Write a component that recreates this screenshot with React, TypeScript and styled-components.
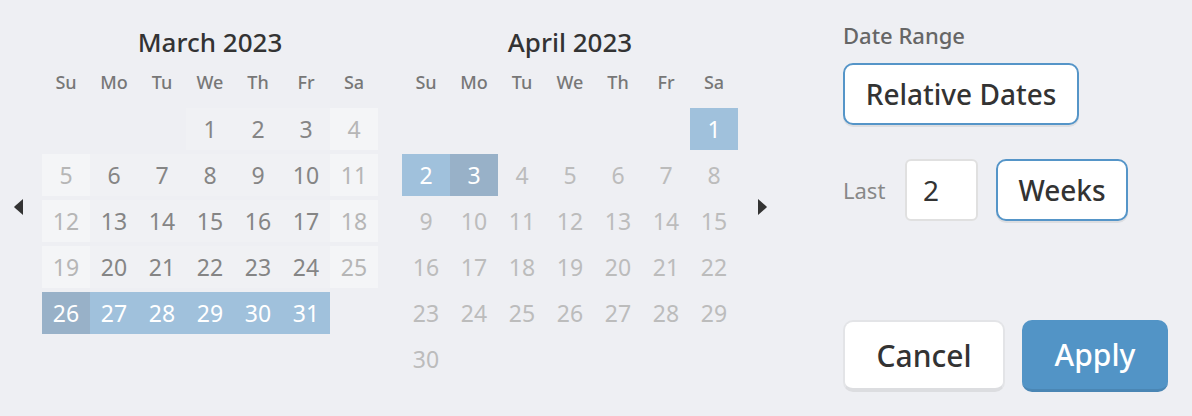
import React from 'react';
import styled, { createGlobalStyle } from 'styled-components';

const GlobalStyle = createGlobalStyle`
  body {
    margin: 0;
    background: #eeeff3;
    font-family: 'Noto Sans', 'Open Sans', sans-serif;
  }
`;

type DayKind = 'empty' | 'weekday' | 'weekend' | 'disabled' | 'range' | 'edge';

const Picker = styled.div`
  display: flex;
  align-items: flex-start;
  padding: 24px 0 0 14px;
  height: 416px;
  box-sizing: border-box;
`;

const NavButton = styled.button<{ $side: 'prev' | 'next' }>`
  display: flex;
  width: 9px;
  padding: 0;
  border: 0;
  background: none;
  margin-top: 175px;
  margin-left: ${(p) => (p.$side === 'next' ? '20px' : '0')};
  margin-right: ${(p) => (p.$side === 'prev' ? '19px' : '0')};
  cursor: pointer;
`;

const Months = styled.div`
  display: flex;
  gap: 24px;
`;

const Month = styled.div`
  display: flex;
  flex-direction: column;
  width: 336px;
`;

const MonthTitle = styled.div`
  height: 36px;
  line-height: 36px;
  text-align: center;
  font-size: 26px;
  font-weight: 500;
  color: #333;
  margin-bottom: 6px;
`;

const WeekHeader = styled.div`
  display: grid;
  grid-template-columns: repeat(7, 48px);
  height: 32px;
  margin-bottom: 10px;
`;

const WeekDay = styled.div`
  text-align: center;
  line-height: 32px;
  font-size: 18px;
  font-weight: 500;
  color: #777;
`;

const DayGrid = styled.div`
  display: grid;
  grid-template-columns: repeat(7, 48px);
  grid-auto-rows: 42px;
  row-gap: 4px;
`;

const dayBg: Record<DayKind, string> = {
  empty: 'transparent',
  weekday: '#f0f1f4',
  weekend: '#f4f5f7',
  disabled: 'transparent',
  range: '#a0c1dc',
  edge: '#98b1c8',
};

const dayColor: Record<DayKind, string> = {
  empty: 'transparent',
  weekday: '#858585',
  weekend: '#b6b6b6',
  disabled: '#bcbcbc',
  range: '#fff',
  edge: '#fff',
};

const Day = styled.div<{ $kind: DayKind }>`
  display: flex;
  align-items: center;
  justify-content: center;
  font-size: 23px;
  background: ${(p) => dayBg[p.$kind]};
  color: ${(p) => dayColor[p.$kind]};
`;

const Panel = styled.div`
  display: flex;
  flex-direction: column;
  margin-left: 76px;
  width: 325px;
`;

const Label = styled.div`
  line-height: 22px;
  font-size: 22px;
  font-weight: 500;
  color: #666;
`;

const OutlineButton = styled.button<{ $width: number }>`
  width: ${(p) => p.$width}px;
  height: 62px;
  box-sizing: border-box;
  background: #fff;
  border: 2px solid #5595c8;
  border-radius: 10px;
  box-shadow: 0 2px 0 rgba(0, 0, 0, 0.07);
  font-family: inherit;
  font-size: 28px;
  font-weight: 500;
  color: #333;
  padding: 0;
  cursor: pointer;
`;

const RangeRow = styled.div`
  display: flex;
  align-items: center;
  margin-top: 34px;
`;

const LastLabel = styled.span`
  font-size: 22px;
  color: #888;
  width: 62px;
`;

const CountInput = styled.input`
  width: 73px;
  height: 62px;
  box-sizing: border-box;
  border: 2px solid #e0e0e0;
  border-radius: 6px;
  background: #fff;
  padding: 0 0 0 16px;
  font-family: inherit;
  font-size: 28px;
  color: #333;
  margin-right: 18px;
  outline: none;
`;

const Actions = styled.div`
  display: flex;
  gap: 17px;
  margin-top: 99px;
`;

const ActionButton = styled.button<{ $primary?: boolean; $width: number }>`
  width: ${(p) => p.$width}px;
  height: 72px;
  box-sizing: border-box;
  border-radius: 10px;
  border: ${(p) => (p.$primary ? '0' : '2px solid #e3e4e7')};
  border-bottom: ${(p) => (p.$primary ? '3px solid #4a86b4' : '4px solid #dcdde0')};
  background: ${(p) => (p.$primary ? '#5294c6' : '#fff')};
  color: ${(p) => (p.$primary ? '#fff' : '#333')};
  font-family: inherit;
  font-size: 30px;
  font-weight: 500;
  padding: 0;
  cursor: pointer;
`;

const weekDays = ['Su', 'Mo', 'Tu', 'We', 'Th', 'Fr', 'Sa'];

type MonthSpec = {
  title: string;
  offset: number;
  days: number;
  kindOf: (day: number, col: number) => DayKind;
};

const march: MonthSpec = {
  title: 'March 2023',
  offset: 3,
  days: 31,
  kindOf: (d, col) => {
    if (d === 26) return 'edge';
    if (d > 26) return 'range';
    return col === 0 || col === 6 ? 'weekend' : 'weekday';
  },
};

const april: MonthSpec = {
  title: 'April 2023',
  offset: 6,
  days: 30,
  kindOf: (d) => {
    if (d === 3) return 'edge';
    if (d <= 2) return 'range';
    return 'disabled';
  },
};

const Arrow = ({ dir }: { dir: 'left' | 'right' }) => (
  <svg width="9" height="16" viewBox="0 0 9 16">
    {dir === 'left' ? (
      <path d="M9 0 L1 7 L0 8 L1 9 L9 16 Z" fill="#333" />
    ) : (
      <path d="M0 0 L8 7 L9 8 L8 9 L0 16 Z" fill="#333" />
    )}
  </svg>
);

const MonthView = ({ spec }: { spec: MonthSpec }) => {
  const cells: React.ReactNode[] = [];
  for (let i = 0; i < spec.offset; i++) {
    cells.push(<Day key={`e${i}`} $kind="empty" />);
  }
  for (let d = 1; d <= spec.days; d++) {
    const col = (spec.offset + d - 1) % 7;
    cells.push(
      <Day key={d} $kind={spec.kindOf(d, col)}>
        {d}
      </Day>
    );
  }
  return (
    <Month>
      <MonthTitle>{spec.title}</MonthTitle>
      <WeekHeader>
        {weekDays.map((w) => (
          <WeekDay key={w}>{w}</WeekDay>
        ))}
      </WeekHeader>
      <DayGrid>{cells}</DayGrid>
    </Month>
  );
};

const App = (): JSX.Element => (
  <>
    <GlobalStyle />
    <Picker>
      <NavButton $side="prev" aria-label="Previous month">
        <Arrow dir="left" />
      </NavButton>
      <Months>
        <MonthView spec={march} />
        <MonthView spec={april} />
      </Months>
      <NavButton $side="next" aria-label="Next month">
        <Arrow dir="right" />
      </NavButton>
      <Panel>
        <Label>Date Range</Label>
        <OutlineButton $width={236} style={{ marginTop: 17 }}>
          Relative Dates
        </OutlineButton>
        <RangeRow>
          <LastLabel>Last</LastLabel>
          <CountInput defaultValue="2" />
          <OutlineButton $width={132}>Weeks</OutlineButton>
        </RangeRow>
        <Actions>
          <ActionButton $width={162}>Cancel</ActionButton>
          <ActionButton $primary $width={146}>
            Apply
          </ActionButton>
        </Actions>
      </Panel>
    </Picker>
  </>
);

export default App;
